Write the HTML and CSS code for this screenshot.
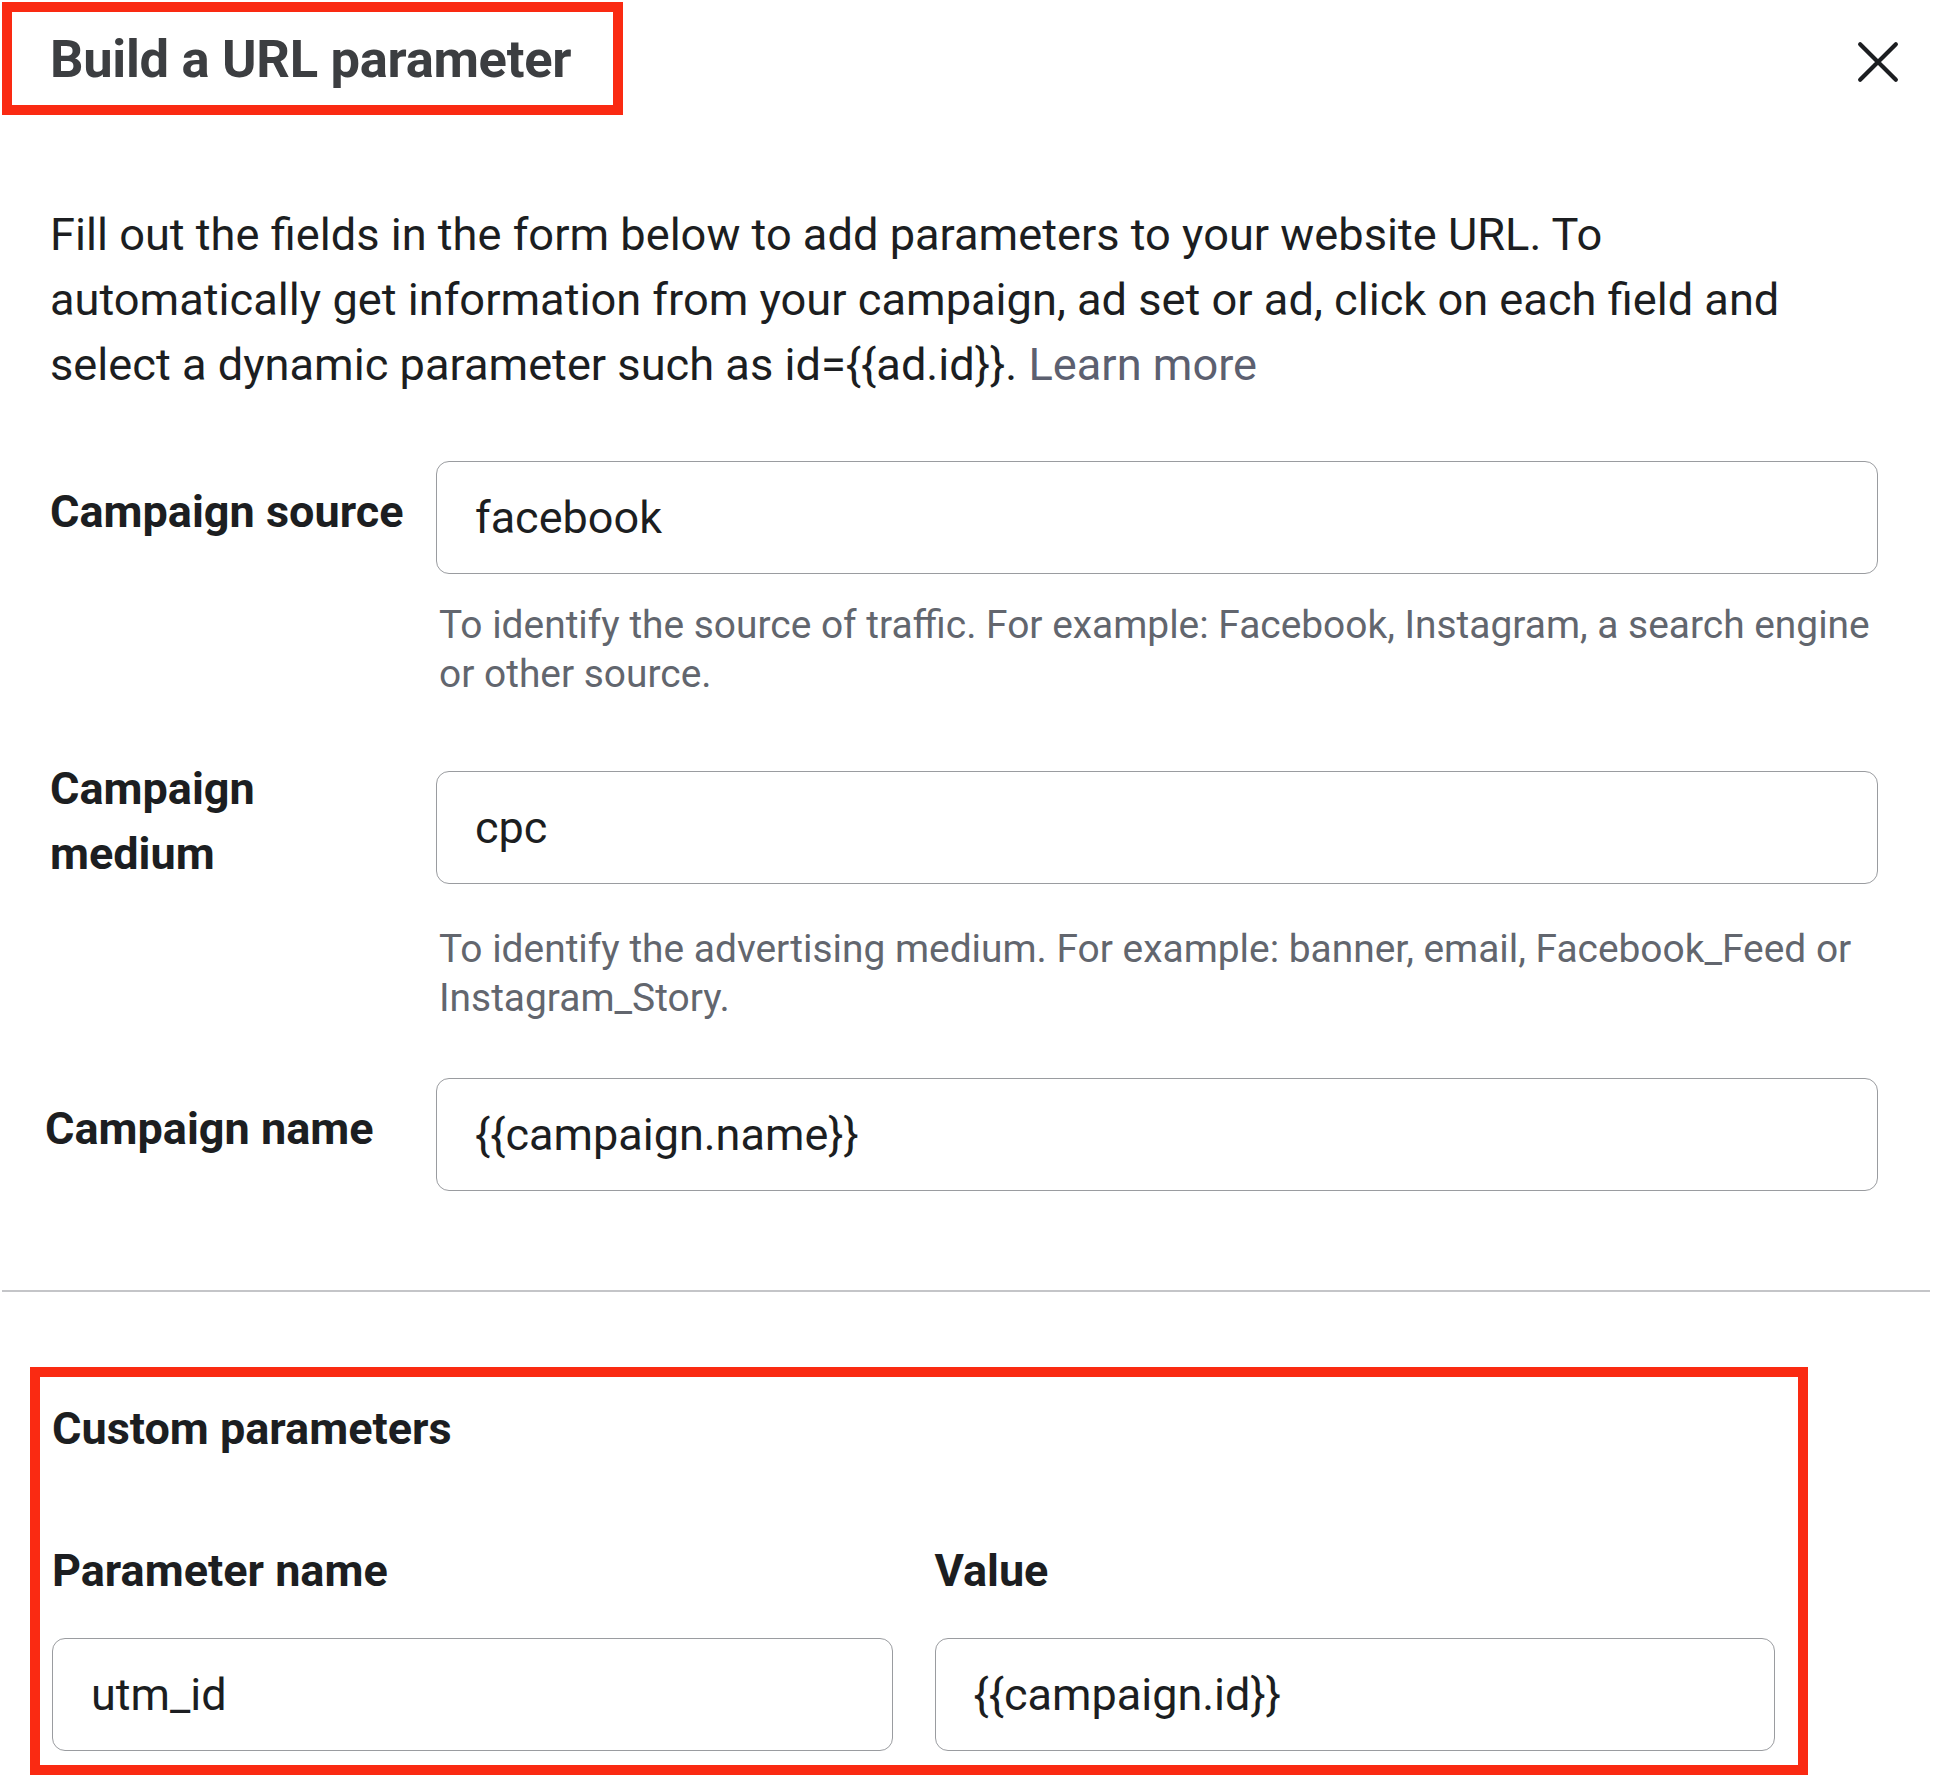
FILE: index.html
```html
<!DOCTYPE html>
<html lang="en">
<head>
<meta charset="utf-8">
<title>Build a URL parameter</title>
<link rel="stylesheet" href="styles.css">
</head>
<body>
<div class="modal">
  <header class="head">
    <h1 class="title-box">Build a URL parameter</h1>
    <button class="close" aria-label="Close">
      <svg viewBox="0 0 40 40" width="42" height="42"><path d="M3 3 L37 37 M37 3 L3 37" stroke="#1c1e21" stroke-width="4" stroke-linecap="round" fill="none"/></svg>
    </button>
  </header>

  <p class="intro">Fill out the fields in the form below to add parameters to your website URL. To automatically get information from your campaign, ad set or ad, click on each field and select a dynamic parameter such as id={{ad.id}}. <a class="learn" href="#">Learn more</a></p>

  <div class="form">
    <div class="row">
      <label class="label">Campaign source</label>
      <div class="field">facebook</div>
      <p class="help">To identify the source of traffic. For example: Facebook, Instagram, a search engine or other source.</p>
    </div>
    <div class="row row-mid">
      <label class="label label-narrow">Campaign medium</label>
      <div class="field">cpc</div>
      <p class="help help-low">To identify the advertising medium. For example: banner, email, Facebook_Feed or Instagram_Story.</p>
    </div>
    <div class="row row-last">
      <label class="label label-shift">Campaign name</label>
      <div class="field">{{campaign.name}}</div>
    </div>
  </div>

  <hr class="divider">

  <section class="custom">
    <h2 class="custom-title">Custom parameters</h2>
    <div class="pair">
      <div class="col">
        <div class="col-label">Parameter name</div>
        <div class="field">utm_id</div>
      </div>
      <div class="col">
        <div class="col-label">Value</div>
        <div class="field">{{campaign.id}}</div>
      </div>
    </div>
  </section>
</div>
</body>
</html>
```

FILE: styles.css
```css
* { box-sizing: border-box; }
html, body { margin: 0; padding: 0; background: #fff; }
body {
  font-family: Roboto, "Noto Sans", "Liberation Sans", sans-serif;
  color: #1c1e21;
  width: 1955px;
  height: 1787px;
  overflow: hidden;
}
.modal { padding-top: 2px; }

.head {
  display: flex;
  justify-content: space-between;
  align-items: flex-start;
  padding-left: 2px;
  padding-right: 56px;
}
.title-box {
  margin: 0;
  width: 621px;
  height: 113px;
  border: 10px solid #fa2a12;
  padding: 0 0 0 38px;
  display: flex;
  align-items: center;
  font-size: 52.5px;
  font-weight: 700;
  color: #3c3e41;
  letter-spacing: -0.3px;
}
.close {
  margin-top: 39px;
  border: 0;
  background: none;
  padding: 0;
  width: 42px;
  height: 42px;
}
.close svg { display: block; }

.intro {
  margin: 87px 0 0 50px;
  width: 1780px;
  font-size: 45.2px;
  line-height: 65px;
  color: #1c1e21;
}
.learn { color: #5c6070; text-decoration: none; }

.form {
  margin-top: 64px;
  padding: 0 77px 0 50px;
}
.row {
  display: grid;
  grid-template-columns: 386px 1fr;
  align-items: center;
  margin-bottom: 70px;
}
.row-mid { margin-bottom: 56px; }
.row-last { margin-bottom: 0; }
.label {
  font-size: 45px;
  font-weight: 700;
  line-height: 65px;
  margin-top: -12px;
}
.label-narrow { width: 260px; }
.label-shift { margin-left: -5px; }
.field {
  height: 113px;
  border: 1.5px solid #9a9ca0;
  border-radius: 13px;
  padding-left: 38px;
  display: flex;
  align-items: center;
  font-size: 45px;
  color: #1c1e21;
}
.help {
  grid-column: 2;
  margin: 26px 0 0 3px;
  font-size: 38.9px;
  line-height: 49px;
  color: #62666e;
}
.help-low { margin-top: 38px; }

.divider {
  margin: 99px 0 0 2px;
  width: 1928px;
  border: 0;
  border-top: 2px solid #c4c5c8;
}

.custom {
  margin: 75px 0 0 30px;
  width: 1778px;
  height: 408px;
  border: 10px solid #fa2a12;
  padding: 22px 23px 0 12px;
}
.custom-title {
  margin: 0;
  font-size: 45px;
  font-weight: 700;
  line-height: 60px;
}
.pair {
  display: grid;
  grid-template-columns: 1fr 1fr;
  column-gap: 42px;
  margin-top: 82px;
}
.col-label {
  font-size: 45px;
  font-weight: 700;
  line-height: 60px;
  margin-bottom: 37px;
}
```
